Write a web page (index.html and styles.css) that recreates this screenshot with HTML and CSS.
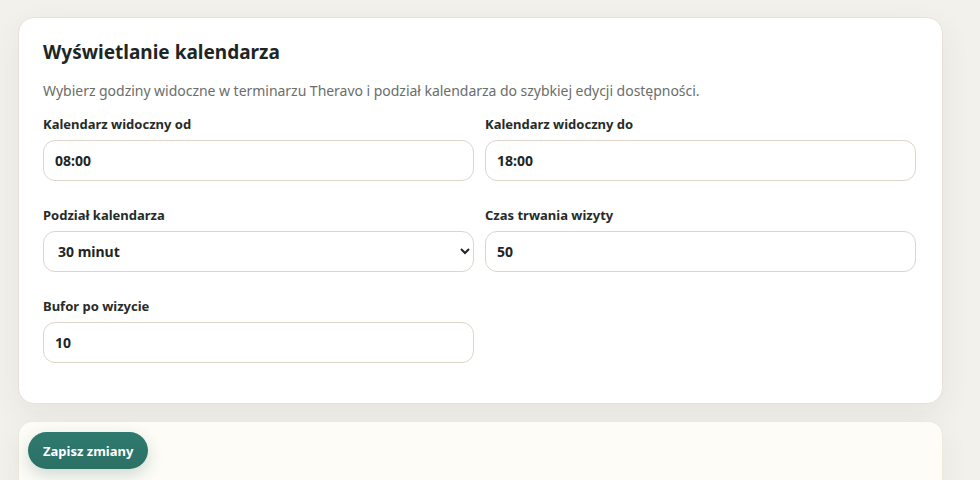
FILE: index.html
```html
<!DOCTYPE html>
<html lang="pl">
<head>
<meta charset="utf-8">
<title>Wyświetlanie kalendarza</title>
<link rel="stylesheet" href="styles.css">
</head>
<body>
<main class="page">
  <section class="card">
    <h2 class="title">Wyświetlanie kalendarza</h2>
    <p class="desc">Wybierz godziny widoczne w terminarzu Theravo i podział kalendarza do szybkiej edycji dostępności.</p>
    <div class="grid">
      <label class="field">
        <span class="label">Kalendarz widoczny od</span>
        <input class="control" type="text" value="08:00">
      </label>
      <label class="field">
        <span class="label">Kalendarz widoczny do</span>
        <input class="control" type="text" value="18:00">
      </label>
      <label class="field">
        <span class="label">Podział kalendarza</span>
        <select class="control select">
          <option>15 minut</option>
          <option selected>30 minut</option>
          <option>60 minut</option>
        </select>
      </label>
      <label class="field">
        <span class="label">Czas trwania wizyty</span>
        <input class="control" type="text" value="50">
      </label>
      <label class="field">
        <span class="label">Bufor po wizycie</span>
        <input class="control" type="text" value="10">
      </label>
    </div>
  </section>
  <section class="actions">
    <button class="btn" type="button">Zapisz zmiany</button>
  </section>
</main>
</body>
</html>
```

FILE: styles.css
```css
* { box-sizing: border-box; }
html, body { margin: 0; }
body {
  background: #f2f1ec;
  font-family: "Noto Sans", "Open Sans", sans-serif;
  color: #1f2725;
  overflow: hidden;
  height: 480px;
}
.page {
  padding: 17px 37px 0 18px;
}
.card {
  background: #ffffff;
  border: 1px solid #e7e2d9;
  border-radius: 16px;
  padding: 21px 26px 40px 24px;
  box-shadow: 0 10px 30px rgba(60, 55, 40, 0.07);
}
.title {
  margin: 0 0 15px;
  font-size: 19px;
  line-height: 27px;
  font-weight: 700;
  color: #1d2624;
}
.desc {
  margin: 0 0 14px;
  font-size: 14px;
  line-height: 20px;
  color: #6a6e6b;
  letter-spacing: -0.03px;
}
.grid {
  display: grid;
  grid-template-columns: 1fr 1fr;
  column-gap: 11px;
  row-gap: 25px;
}
.field {
  display: flex;
  flex-direction: column;
  gap: 7px;
}
.label {
  font-size: 13px;
  line-height: 18px;
  font-weight: 700;
  color: #262b29;
}
.control {
  height: 41px;
  width: 100%;
  border: 1px solid #ddd5c8;
  border-radius: 12px;
  background: #ffffff;
  padding: 0 11px;
  font-family: "Noto Sans", "Open Sans", sans-serif;
  font-size: 14px;
  font-weight: 700;
  color: #1d2624;
  outline: none;
}
.select {
  padding: 0 8px 0 10px;
}
.actions {
  margin-top: 17px;
  background: #fdfcf6;
  border: 1px solid #ede9df;
  border-radius: 14px;
  padding: 10px 9px;
  height: 80px;
  box-shadow: 0 10px 30px rgba(60, 55, 40, 0.06);
}
.btn {
  height: 37px;
  padding: 0 15px;
  border: none;
  border-radius: 999px;
  background: linear-gradient(180deg, #2f7a6e 0%, #2b7065 100%);
  color: #ffffff;
  font-family: "Noto Sans", "Open Sans", sans-serif;
  font-size: 13px;
  font-weight: 700;
  box-shadow: 0 6px 16px rgba(40, 100, 90, 0.22);
  cursor: pointer;
}
```
